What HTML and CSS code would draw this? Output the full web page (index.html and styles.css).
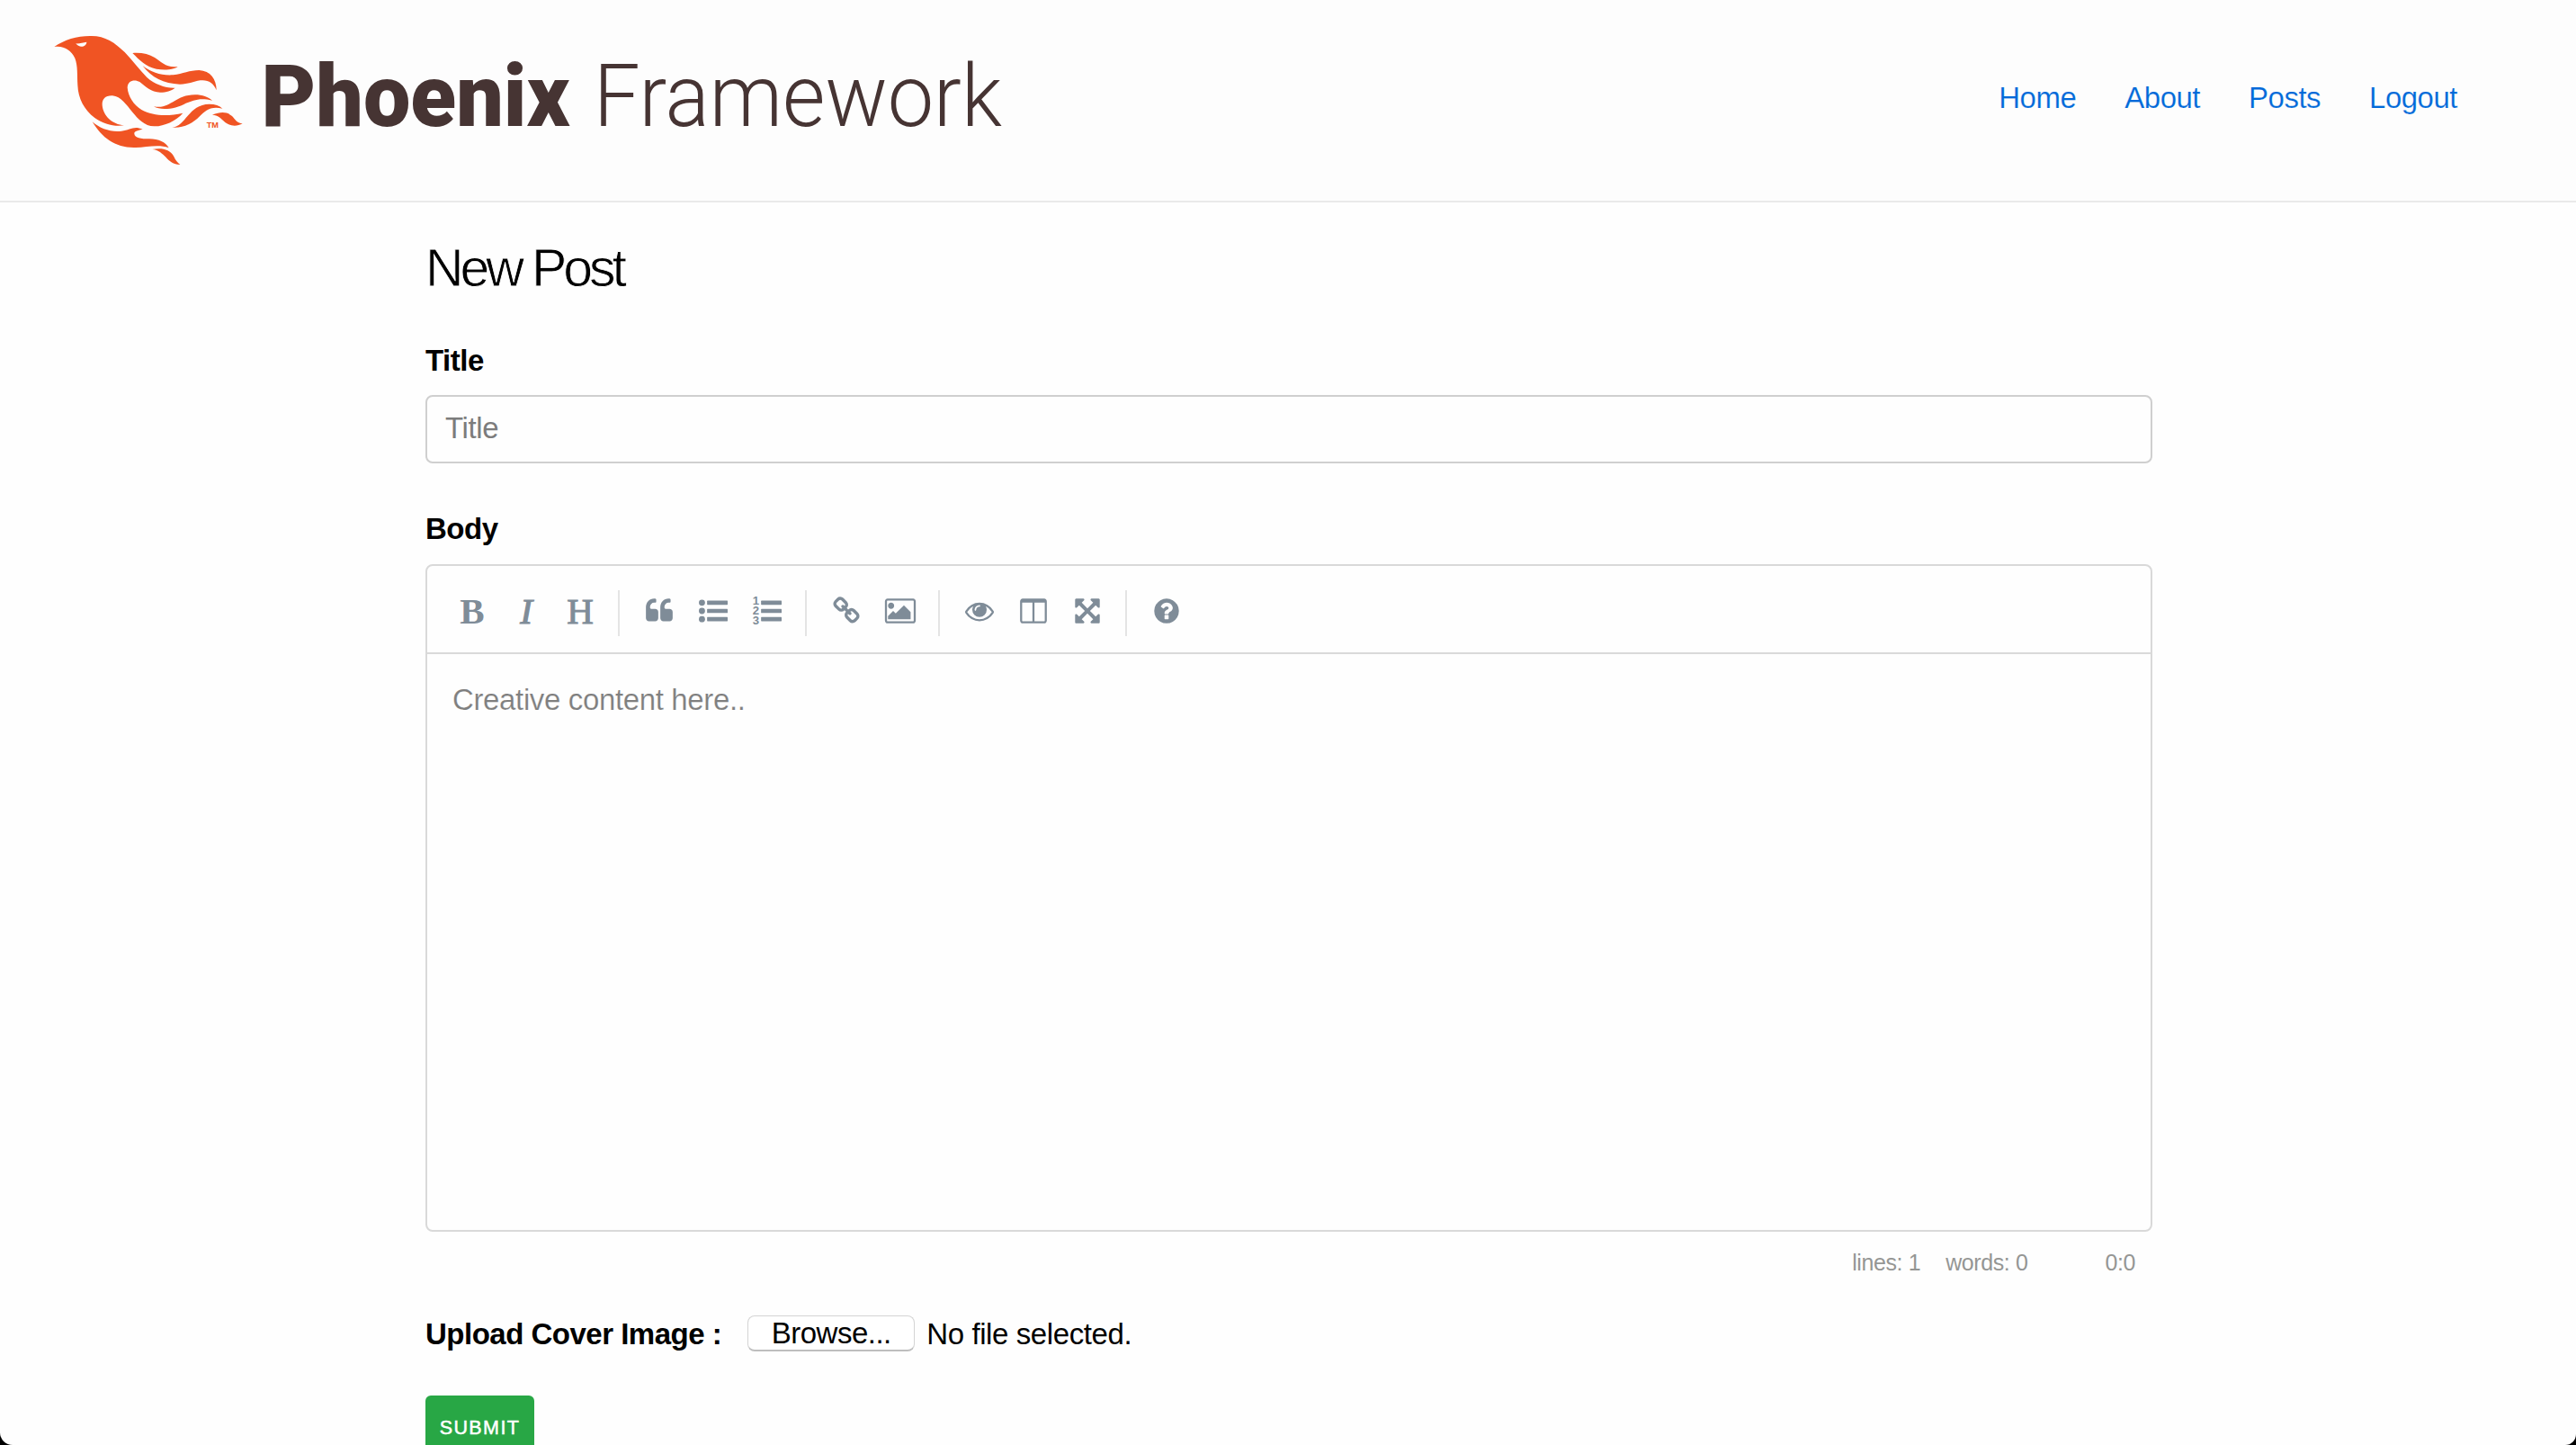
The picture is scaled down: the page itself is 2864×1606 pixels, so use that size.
FILE: index.html
```html
<!DOCTYPE html>
<html lang="en">
<head>
<meta charset="utf-8">
<title>New Post · Phoenix Framework</title>
<link rel="stylesheet" href="styles.css">
</head>
<body>
<header class="site-header">
  <a class="logo" href="#" aria-label="Phoenix Framework">
    <svg class="logo-art" width="1060" height="164" viewBox="60 20 1060 164">
      <g transform="translate(40 20) scale(.33333)" fill="#f05423">
        <path fill-rule="evenodd" d="M61 96C95 72 140 59 185 60C232 60 262 82 296 114C322 141 345 172 370 198C396 221 430 234 464 233C450 243 436 248 414 248C384 247 366 229 346 213C330 204 306 207 305 232C307 262 326 290 352 306C390 327 440 328 490 317C466 344 425 362 394 361C362 360 341 337 322 314C301 289 284 262 255 259C232 258 220 270 221 290C224 327 255 354 294 358C262 363 225 354 196 333C160 305 141 268 139 224C137 190 140 160 130 134C117 106 91 91 61 96ZM133 85C145 86 157 82 169 80C168 91 159 96 150 95C142 94 137 91 133 85Z"/>
        <path d="M322 117C352 115 376 120 396 132C420 147 434 167 473 162C462 172 430 175 402 170C366 163 345 140 322 117Z"/>
        <path d="M356 160C385 182 420 193 458 190C490 186 512 174 544 174C582 176 602 204 602 241C592 215 573 205 548 208C524 212 508 221 480 221C425 219 386 199 356 160Z"/>
        <path d="M393 295C450 306 460 257 530 256C556 256 574 264 588 275C545 264 525 275 500 284C466 304 416 309 393 295Z"/>
        <path d="M454 365C500 362 508 288 578 287C598 287 612 292 622 302C582 292 564 310 546 328C522 352 492 368 454 365Z"/>
        <path d="M588 323C616 312 637 312 654 327C666 340 669 350 689 352C671 362 650 362 632 349C616 334 608 323 588 323Z"/>
        <path d="M188 346C215 370 250 381 285 377C315 374 325 358 356 371C343 374 327 376 328 386C329 399 350 403 378 403C410 403 432 414 443 433C410 420 370 431 332 432C266 434 221 401 188 346Z"/>
        <path d="M388 438C420 432 447 438 460 462C466 475 472 483 481 489C437 490 430 441 388 438Z"/>
        <text class="logo-tm" x="569" y="367" textLength="40" lengthAdjust="spacingAndGlyphs">TM</text>
      </g>
      <text class="logo-strong" x="290.500" y="140.300" textLength="343" lengthAdjust="spacingAndGlyphs">Phoenix</text>
      <text class="logo-light" x="660" y="140.300" textLength="454" lengthAdjust="spacingAndGlyphs">Framework</text>
    </svg>
  </a>
  <nav class="site-nav">
    <a href="#">Home</a>
    <a href="#">About</a>
    <a href="#">Posts</a>
    <a href="#">Logout</a>
  </nav>
</header>

<main class="page">
  <h1>New Post</h1>
  <form class="post-form">
    <label class="field-label" for="title">Title</label>
    <input class="title-input" id="title" type="text" placeholder="Title">

    <label class="field-label body-label">Body</label>
    <div class="editor">
      <div class="toolbar">
        <button type="button" class="tool tool-bold">B</button>
        <button type="button" class="tool tool-italic">I</button>
        <button type="button" class="tool tool-heading">H</button>
        <i class="separator"></i>
        <button type="button" class="tool" aria-label="Quote"><svg class="icon" viewBox="0 0 1792 1792"><path d="M832 960v384q0 80-56 136t-136 56h-384q-80 0-136-56t-56-136v-704q0-104 40.500-198.500t109.500-163.500 163.500-109.500 198.500-40.500h64q26 0 45 19t19 45v128q0 26-19 45t-45 19h-64q-106 0-181 75t-75 181v32q0 40 28 68t68 28h224q80 0 136 56t56 136zm896 0v384q0 80-56 136t-136 56h-384q-80 0-136-56t-56-136v-704q0-104 40.500-198.500t109.500-163.500 163.500-109.500 198.500-40.500h64q26 0 45 19t19 45v128q0 26-19 45t-45 19h-64q-106 0-181 75t-75 181v32q0 40 28 68t68 28h224q80 0 136 56t56 136z"/></svg></button>
        <button type="button" class="tool" aria-label="Generic list"><svg class="icon" viewBox="0 0 1792 1792"><circle cx="192" cy="384" r="192"/><circle cx="192" cy="896" r="192"/><circle cx="192" cy="1408" r="192"/><rect x="512" y="256" width="1280" height="256" rx="32"/><rect x="512" y="768" width="1280" height="256" rx="32"/><rect x="512" y="1280" width="1280" height="256" rx="32"/></svg></button>
        <button type="button" class="tool" aria-label="Numbered list"><svg class="icon" viewBox="0 0 1792 1792"><rect x="512" y="256" width="1280" height="256" rx="32"/><rect x="512" y="768" width="1280" height="256" rx="32"/><rect x="512" y="1280" width="1280" height="256" rx="32"/><g class="list-digits"><text x="-10" y="490">1</text><text x="-10" y="1130">2</text><text x="-10" y="1750">3</text></g></svg></button>
        <i class="separator"></i>
        <button type="button" class="tool" aria-label="Link"><svg class="icon" viewBox="0 0 1792 1792"><path d="M1520 1216q0-40-28-68l-208-208q-28-28-68-28-42 0-72 32 3 3 19 18.500t21.500 21.500 15 19 13 25.500 3.500 27.500q0 40-28 68t-68 28q-15 0-27.500-3.500t-25.500-13-19-15-21.500-21.500-18.500-19q-33 31-33 73 0 40 28 68l206 207q27 27 68 27 40 0 68-26l147-146q28-28 28-67zm-703-705q0-40-28-68l-206-207q-28-28-68-28-39 0-68 27l-147 146q-28 28-28 67 0 40 28 68l208 208q27 27 68 27 42 0 72-31-3-3-19-18.500t-21.500-21.500-15-19-13-25.500-3.500-27.500q0-40 28-68t68-28q15 0 27.500 3.500t25.500 13 19 15 21.500 21.500 18.500 19q33-31 33-73zm895 705q0 120-85 203l-147 146q-83 83-203 83-121 0-204-85l-206-207q-83-83-83-203 0-123 88-209l-88-88q-86 88-208 88-120 0-204-84l-208-208q-84-84-84-204t85-203l147-146q83-83 203-83 121 0 204 85l206 207q83 83 83 203 0 123-88 209l88 88q86-88 208-88 120 0 204 84l208 208q84 84 84 204z"/></svg></button>
        <button type="button" class="tool" aria-label="Image"><svg class="icon" viewBox="0 0 1792 1792"><path d="M512 576q0 80-56 136t-136 56-136-56-56-136 56-136 136-56 136 56 56 136zm1024 384v448h-1408v-192l320-320 160 160 512-512zm160-704h-1600q-13 0-22.500 9.500t-9.500 22.500v1216q0 13 9.500 22.500t22.500 9.500h1600q13 0 22.500-9.500t9.500-22.500v-1216q0-13-9.500-22.500t-22.500-9.500zm160 32v1216q0 66-47 113t-113 47h-1600q-66 0-113-47t-47-113v-1216q0-66 47-113t113-47h1600q66 0 113 47t47 113z" fill-rule="evenodd"/></svg></button>
        <i class="separator"></i>
        <button type="button" class="tool" aria-label="Preview"><svg class="icon" viewBox="0 0 1792 1792"><path d="M1664 960q-152-236-381-353 61 104 61 225 0 185-131.500 316.500t-316.500 131.500-316.500-131.500-131.500-316.500q0-121 61-225-229 117-381 353 133 205 333.500 326.500t434.500 121.500 434.500-121.500 333.500-326.500zm-720-384q0-20-14-34t-34-14q-125 0-214.500 89.500t-89.500 214.500q0 20 14 34t34 14 34-14 14-34q0-86 61-147t147-61q20 0 34-14t14-34zm848 384q0 34-20 69-140 230-376.500 368.500t-499.500 138.500-499.500-139-376.500-368q-20-35-20-69t20-69q140-229 376.500-368t499.500-139 499.500 139 376.500 368q20 35 20 69z"/></svg></button>
        <button type="button" class="tool" aria-label="Side by side"><svg class="icon" viewBox="0 0 1792 1792"><path d="M224 1536h608v-1152h-640v1120q0 13 9.500 22.500t22.500 9.500zm1376-32v-1120h-640v1152h608q13 0 22.500-9.500t9.500-22.500zm128-1216v1216q0 66-47 113t-113 47h-1344q-66 0-113-47t-47-113v-1216q0-66 47-113t113-47h1344q66 0 113 47t47 113z"/></svg></button>
        <button type="button" class="tool" aria-label="Fullscreen"><svg class="icon" viewBox="0 0 1792 1792"><path d="M1411 541l-355 355 355 355 144-144q29-31 70-14 39 17 39 59v448q0 26-19 45t-45 19h-448q-42 0-59-40-17-39 14-69l144-144-355-355-355 355 144 144q31 30 14 69-17 40-59 40h-448q-26 0-45-19t-19-45v-448q0-42 40-59 39-17 69 14l144 144 355-355-355-355-144 144q-19 19-45 19-12 0-24-5-40-17-40-59v-448q0-26 19-45t45-19h448q42 0 59 40 17 39-14 69l-144 144 355 355 355-355-144-144q-31-30-14-69 17-40 59-40h448q26 0 45 19t19 45v448q0 42-39 59-13 5-25 5-26 0-45-19z"/></svg></button>
        <i class="separator"></i>
        <button type="button" class="tool" aria-label="Guide"><svg class="icon" viewBox="0 0 1792 1792"><path d="M1024 1376v-192q0-14-9-23t-23-9h-192q-14 0-23 9t-9 23v192q0 14 9 23t23 9h192q14 0 23-9t9-23zm256-672q0-88-55.500-163t-138.500-116-170-41q-243 0-371 213-15 24 8 42l132 100q7 6 19 6 16 0 25-12 53-68 86-92 34-24 86-24 48 0 85.500 26t37.500 59q0 38-20 61t-68 45q-63 28-115.500 86.500t-52.500 125.500v36q0 14 9 23t23 9h192q14 0 23-9t9-23q0-19 21.500-49.500t54.500-49.500q32-18 49-28.500t46-35 44.500-48 28-60.500 12.500-81zm384 192q0 209-103 385.500t-279.500 279.500-385.500 103-385.500-103-279.500-279.500-103-385.500 103-385.500 279.500-279.500 385.500-103 385.500 103 279.500 279.500 103 385.500z"/></svg></button>
      </div>
      <div class="editor-body">Creative content here..</div>
    </div>
    <div class="statusbar"><span class="lines">lines: 1</span><span class="words">words: 0</span><span class="cursor">0:0</span></div>

    <div class="upload">
      <label class="upload-label">Upload Cover Image :</label>
      <button type="button" class="browse">Browse...</button>
      <span class="file-name">No file selected.</span>
    </div>
    <button type="submit" class="submit">Submit</button>
  </form>
</main>
</body>
</html>
```
FILE: styles.css
```css
* { box-sizing: border-box; }

html { background: #000; }

body {
  margin: 0;
  height: 1606px;
  overflow: hidden;
  border-radius: 0 0 12px 14px;
  background: #fefefe;
  color: #000;
  font-family: "Liberation Sans", Arial, sans-serif;
  font-size: 33px;
}

button { font-family: inherit; }

.site-header {
  display: flex;
  justify-content: space-between;
  height: 225px;
  padding: 20px 132px 0 60px;
  background: #fdfdfd;
  border-bottom: 2px solid #eaeaea;
}

.logo-art { display: block; overflow: visible; }
.logo-strong, .logo-light { font-family: Roboto, sans-serif; font-size: 96.500px; fill: #463433; }
.logo-strong { font-weight: 900; }
.logo-light { font-weight: 300; }
.logo-tm { font-family: "Liberation Sans", sans-serif; font-weight: 700; font-size: 27px; }

.site-nav { display: flex; gap: 54px; padding-top: 70px; line-height: 38px; }
.site-nav a {
  color: #0069d9;
  text-decoration: none;
  letter-spacing: -.5px;
  -webkit-text-stroke: .2px #fdfdfd;
}

.page { width: 1920px; margin-left: 473px; }

h1 {
  margin: 0;
  padding-top: 38px;
  font-size: 59px;
  line-height: 70px;
  font-weight: 400;
  letter-spacing: -4.100px;
  -webkit-text-stroke: .8px #fefefe;
}

.post-form { display: flex; flex-direction: column; }

.field-label {
  margin-top: 49px;
  line-height: 38px;
  font-weight: 700;
  letter-spacing: -.5px;
}

.title-input {
  height: 76px;
  margin: 19px 0 0;
  padding: 0 20px 3px;
  border: 2px solid #cfcfcf;
  border-radius: 8px;
  background: #fefefe;
  font: inherit;
  letter-spacing: -.4px;
}
.title-input::placeholder { color: #7c7c7c; opacity: 1; }

.body-label { margin-top: 54px; }

.editor {
  height: 742px;
  margin-top: 20px;
  border: 2px solid #d9d9d9;
  border-radius: 8px;
}

.toolbar {
  display: flex;
  height: 98px;
  padding: 20px;
  border-bottom: 2px solid #d9d9d9;
}

.tool {
  display: flex;
  align-items: center;
  justify-content: center;
  width: 60px;
  height: 60px;
  padding: 0 0 1px;
  border: 0;
  background: none;
  color: #7f8c98;
  font-family: "Liberation Serif", serif;
  font-size: 41px;
  line-height: 56px;
}
.tool-bold { font-weight: 700; }
.tool-italic { font-style: italic; -webkit-text-stroke: 1.200px currentColor; }
.tool-heading { -webkit-text-stroke: 1px currentColor; }

.icon { width: 32px; height: 32px; fill: currentColor; overflow: visible; }
.list-digits { font: 700 740px "Liberation Sans", sans-serif; }

.separator {
  width: 2px;
  height: 51px;
  margin: 7px 14px 0 12px;
  background: #e4e4e4;
}

.editor-body {
  padding: 32px 28px;
  line-height: 38px;
  color: #7f7f7f;
  letter-spacing: -.36px;
  -webkit-text-stroke: .2px #fefefe;
}

.statusbar {
  display: flex;
  justify-content: flex-end;
  padding: 20px 19px 0 0;
  color: #959694;
  font-size: 25px;
  line-height: 28px;
  letter-spacing: -.4px;
}
.lines { margin-right: 28px; }
.words { margin-right: 86px; }

.upload { display: flex; align-items: center; height: 42px; margin-top: 44px; }
.upload-label { padding-top: 2px; font-weight: 700; letter-spacing: -.5px; }
.file-name { padding-top: 2px; letter-spacing: -.4px; }
.browse {
  width: 186px;
  height: 40px;
  margin: 0 13px 0 29px;
  padding: 0;
  border: 1px solid #d4d4d4;
  border-bottom: 2px solid #bebebe;
  border-radius: 8px;
  background: #fff;
  color: #000;
  font-size: 33px;
  line-height: 38px;
  letter-spacing: -.5px;
}

.submit {
  width: 121px;
  height: 76px;
  margin-top: 48px;
  padding: 0 0 4px;
  border: 0;
  border-radius: 6px;
  background: #28a745;
  color: #fff;
  font-size: 21.500px;
  letter-spacing: 1.400px;
  text-transform: uppercase;
  -webkit-text-stroke: .5px #fff;
}
```
